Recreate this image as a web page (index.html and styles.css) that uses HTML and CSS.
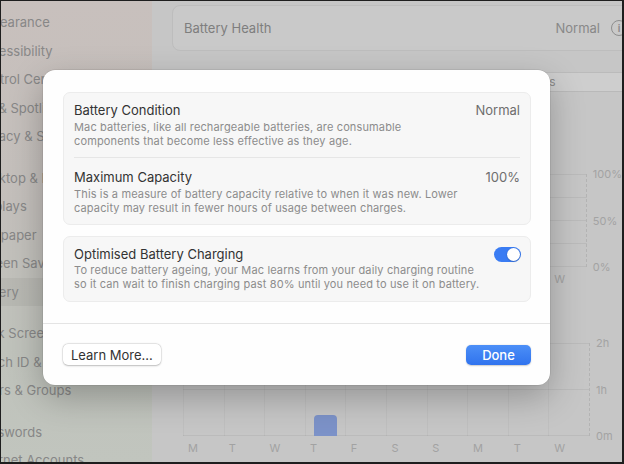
FILE: index.html
```html
<!DOCTYPE html>
<html lang="en">
<head>
    <meta charset="UTF-8">
    <meta name="viewport" content="width=device-width, initial-scale=1.0">
    <title>Battery Health</title>
    <link rel="stylesheet" href="styles.css">
</head>
<body>
    <div class="screen">
        <aside class="sidebar">
            <ul class="nav">
                <li>Appearance</li>
                <li>Accessibility</li>
                <li>Control Centre</li>
                <li>Siri &amp; Spotlight</li>
                <li>Privacy &amp; Security</li>
                <li class="group-start">Desktop &amp; Dock</li>
                <li>Displays</li>
                <li>Wallpaper</li>
                <li>Screen Saver</li>
                <li class="active">Battery</li>
                <li class="group-start">Lock Screen</li>
                <li>Touch ID &amp; Password</li>
                <li>Users &amp; Groups</li>
                <li class="group-start">Passwords</li>
                <li>Internet Accounts</li>
            </ul>
        </aside>

        <main class="main">
            <div class="health-card">
                <span>Battery Health</span>
                <span class="health-status">Normal <span class="info-icon">i</span></span>
            </div>

            <div class="segmented">
                <span class="segment">Last 24 Hours</span>
                <span class="segment selected">Last 10 Days</span>
            </div>

            <!-- battery level chart -->
            <section class="chart chart-level">
                <div class="chart-body">
                    <div class="plot">
                        <div class="cols">
                            <div class="col"></div><div class="col"></div><div class="col"></div><div class="col"></div><div class="col"></div>
                            <div class="col"></div><div class="col"></div><div class="col"></div><div class="col"></div><div class="col"></div>
                        </div>
                    </div>
                    <div class="axis">
                        <span>100%</span>
                        <span>50%</span>
                        <span>0%</span>
                    </div>
                </div>
                <div class="days">
                    <span>M</span><span>T</span><span>W</span><span>T</span><span>F</span>
                    <span>S</span><span>S</span><span>M</span><span>T</span><span>W</span>
                </div>
            </section>

            <!-- screen on usage chart -->
            <section class="chart chart-usage">
                <div class="chart-body">
                    <div class="plot">
                        <div class="cols">
                            <div class="col"></div><div class="col"></div><div class="col"></div>
                            <div class="col"><div class="bar" style="height: 21px"></div></div>
                            <div class="col"></div><div class="col"></div><div class="col"></div>
                            <div class="col"></div><div class="col"></div><div class="col"></div>
                        </div>
                    </div>
                    <div class="axis">
                        <span>2h</span>
                        <span>1h</span>
                        <span>0m</span>
                    </div>
                </div>
                <div class="days">
                    <span>M</span><span>T</span><span>W</span><span>T</span><span>F</span>
                    <span>S</span><span>S</span><span>M</span><span>T</span><span>W</span>
                </div>
            </section>
        </main>

        <div class="modal">
            <div class="modal-content">
                <div class="group">
                    <div class="row">
                        <div class="row-text">
                            <div class="row-title">Battery Condition</div>
                            <div class="row-desc">Mac batteries, like all rechargeable batteries, are consumable<br>components that become less effective as they age.</div>
                        </div>
                        <div class="row-value">Normal</div>
                    </div>
                    <div class="row">
                        <div class="row-text">
                            <div class="row-title">Maximum Capacity</div>
                            <div class="row-desc">This is a measure of battery capacity relative to when it was new. Lower<br>capacity may result in fewer hours of usage between charges.</div>
                        </div>
                        <div class="row-value">100%</div>
                    </div>
                </div>

                <div class="group">
                    <div class="row row-toggle">
                        <div class="row-text">
                            <div class="row-title">Optimised Battery Charging</div>
                            <div class="row-desc">To reduce battery ageing, your Mac learns from your daily charging routine<br>so it can wait to finish charging past 80% until you need to use it on battery.</div>
                        </div>
                        <div class="switch on"><span class="knob"></span></div>
                    </div>
                </div>
            </div>

            <div class="modal-footer">
                <button class="btn">Learn More...</button>
                <button class="btn btn-primary">Done</button>
            </div>
        </div>
    </div>
</body>
</html>
```

FILE: styles.css
```css
body {
    margin: 0;
    font-family: Inter, "Noto Sans", sans-serif;
    -webkit-font-smoothing: antialiased;
}
.screen {
    position: relative;
    display: flex;
    width: 624px;
    height: 464px;
    box-sizing: border-box;
    border-style: solid;
    border-color: #1e1e1e;
    border-width: 1px 2px 2px 1px;
    overflow: hidden;
    background: #c6c6c6;
}

/* sidebar */
.sidebar {
    width: 151px;
    flex-shrink: 0;
    overflow: hidden;
    background: linear-gradient(to bottom, #c8c0bd 0%, #c3bfbb 45%, #bfc2bb 75%, #c1c5be 100%);
}
.nav {
    list-style: none;
    margin: 0;
    padding: 7px 0 0;
}
.nav li {
    height: 28.5px;
    line-height: 28.5px;
    margin-left: -26px;
    margin-right: 12px;
    font-size: 13px;
    color: #878787;
    white-space: nowrap;
}
.nav li.group-start {
    margin-top: 13px;
}
.nav li.active {
    background: rgba(0,0,0,0.045);
    border-radius: 6px;
}

/* main pane */
.main {
    flex: 1;
    min-width: 0;
    overflow: hidden;
    padding: 4px 0 0 20px;
}
.health-card {
    display: flex;
    justify-content: space-between;
    align-items: center;
    height: 46px;
    box-sizing: border-box;
    margin-right: -18px;
    padding: 0 12px 0 11px;
    background: #c9c9c9;
    border: 1px solid #bdbdbd;
    border-radius: 8px;
    font-size: 13px;
    color: #7e7e7e;
}
.health-status {
    display: flex;
    align-items: center;
    gap: 11px;
    color: #888;
}
.info-icon {
    width: 14px;
    height: 14px;
    border: 1px solid #8e8e8e;
    border-radius: 50%;
    font-size: 10px;
    line-height: 14px;
    text-align: center;
    font-weight: 600;
}
.segmented {
    display: flex;
    height: 20px;
    margin: 21px -18px 0 0;
    background: #c3c3c3;
    border-top: 1px solid #bbbbbb;
    border-bottom: 1px solid #b9b9b9;
    box-sizing: border-box;
}
.segment {
    flex: 1;
    font-size: 12px;
    line-height: 18px;
    text-align: center;
    color: #8a8a8a;
}
.segment.selected {
    background: #cecece;
    padding-right: 4px;
}

/* charts */
.chart {
    margin-left: 11px;
}
.chart-level {
    margin-top: 82px;
}
.chart-usage {
    margin-top: 57px;
}
.chart-body {
    display: flex;
    height: 93px;
}
.plot {
    width: 407px;
    height: 93px;
}
.chart-level .plot {
    background: repeating-linear-gradient(to bottom, #bbbbbb 0 1px, transparent 1px 23px);
}
.chart-usage .plot {
    background: repeating-linear-gradient(to bottom, #bbbbbb 0 1px, transparent 1px 46px);
}
.cols {
    display: flex;
    height: 100%;
    border-right: 1px dashed #b3b3b3;
}
.col {
    flex: 1;
    display: flex;
    align-items: flex-end;
    justify-content: center;
    border-left: 1px solid rgba(0,0,0,0.035);
}
.bar {
    width: 23px;
    background: #7c92c8;
    border-radius: 4px 4px 0 0;
}
.axis {
    display: flex;
    flex-direction: column;
    justify-content: space-between;
    height: 107px;
    margin: -7px 0 0 6px;
    font-size: 11px;
    line-height: 14px;
    color: #a3a3a3;
}
.days {
    display: flex;
    width: 407px;
    margin-top: 5px;
    font-size: 11px;
    line-height: 14px;
    color: #a2a2a2;
}
.days span {
    flex: 1;
    padding-left: 5px;
}

/* sheet */
.modal {
    position: absolute;
    left: 42px;
    top: 69px;
    width: 507px;
    background: #fefefe;
    border-radius: 12px;
    box-shadow: 0 12px 34px rgba(0,0,0,0.26), 0 0 0 0.5px rgba(0,0,0,0.12);
}
.modal-content {
    padding: 22px 19px 21px 20px;
}
.group {
    background: #f7f7f7;
    border: 1px solid #ececec;
    border-radius: 7px;
    padding: 0 10px;
}
.group + .group {
    margin-top: 11px;
}
.row {
    display: flex;
    justify-content: space-between;
    align-items: flex-start;
    padding: 9px 0 9px;
}
.row + .row {
    border-top: 1px solid #e6e6e6;
    padding-top: 11px;
}
.row-title {
    font-size: 13px;
    line-height: 16px;
    color: #333;
}
.row-desc {
    margin-top: 2px;
    font-size: 11px;
    letter-spacing: 0.14px;
    line-height: 14px;
    color: #8c8c8c;
}
.row-toggle {
    padding-bottom: 10px;
}
.row-toggle .row-desc {
    margin-top: 1px;
}
.row-value {
    font-size: 13px;
    line-height: 16px;
    color: #6e6e6e;
}
.switch {
    position: relative;
    width: 27px;
    height: 15px;
    margin: 1px -1px 0 0;
    border-radius: 8px;
    background: #d0d0d0;
}
.switch.on {
    background: #3a7cf3;
}
.knob {
    position: absolute;
    top: 1px;
    right: 1px;
    width: 13px;
    height: 13px;
    border-radius: 50%;
    background: #fff;
    box-shadow: 0 0.5px 1.5px rgba(0,0,0,0.3);
}
.modal-footer {
    display: flex;
    justify-content: space-between;
    align-items: center;
    padding: 20px 19px 20px 20px;
    border-top: 1px solid #e4e4e4;
}
.btn {
    height: 21px;
    padding: 0 8px;
    font-family: inherit;
    font-size: 13px;
    color: #333;
    background: #fff;
    border: none;
    border-radius: 5px;
    box-shadow: 0 0.5px 2px rgba(0,0,0,0.22), 0 0 0 0.5px rgba(0,0,0,0.1);
}
.btn-primary {
    width: 65px;
    height: 20px;
    color: #fff;
    font-weight: 500;
    background: linear-gradient(to bottom, #4c8ff7, #3073ee);
    box-shadow: 0 0.5px 1.5px rgba(0,0,0,0.2);
}
```
